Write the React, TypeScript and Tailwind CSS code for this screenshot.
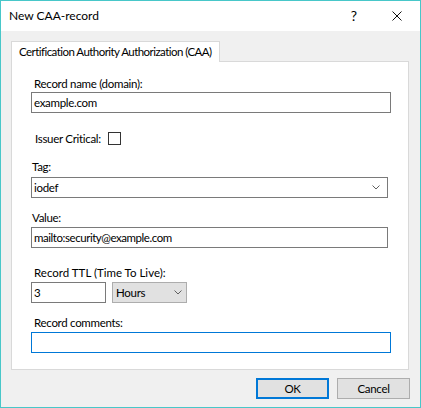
import React from "react";

const Chevron = ({ className = "" }: { className?: string }) => (
  <svg width="8" height="5" viewBox="0 0 8 5" className={className}>
    <polyline points="0.5,0.5 4,4 7.5,0.5" fill="none" stroke="#606060" strokeWidth="1" />
  </svg>
);

export default function App() {
  return (
    <div
      className="w-[421px] h-[408px] border border-[#48c7c9] bg-[#f0f0f0] flex flex-col text-[11.5px] tracking-[-0.3px] text-black whitespace-nowrap"
      style={{ fontFamily: 'Lato, "Liberation Sans", Arial, sans-serif' }}
    >
      <div className="h-[30px] bg-white flex items-center shrink-0">
        <span className="pl-[8px] text-[12px] tracking-normal leading-none">New CAA-record</span>
        <span className="ml-auto mr-[35px] text-[14px] tracking-normal leading-none">?</span>
        <svg width="10" height="10" viewBox="0 0 10 10" className="mr-[18px]">
          <line x1="0.5" y1="0.5" x2="9.5" y2="9.5" stroke="#111" strokeWidth="1" />
          <line x1="9.5" y1="0.5" x2="0.5" y2="9.5" stroke="#111" strokeWidth="1" />
        </svg>
      </div>
      <div className="px-[10px] pt-[10px] flex flex-col">
        <div className="flex">
          <div className="w-[209px] h-[21px] bg-white border border-b-0 border-[#d9d9d9] pl-[7px] flex items-center relative -mb-px z-10">
            <span className="leading-none tracking-[-0.55px]">Certification Authority Authorization (CAA)</span>
          </div>
        </div>
        <div className="w-[398px] bg-white border border-[#d9d9d9] pl-[19px] pb-[16px] flex flex-col">
          <div className="mt-[15px] h-[14px] leading-[14px] pl-[3px]">Record name (domain):</div>
          <div className="mt-[1px] w-[360px] h-[21px] border border-[#7a7a7a] pl-[2px] leading-[19px]">example.com</div>
          <div className="mt-[19px] h-[13px] flex items-center">
            <span className="pl-[4px] leading-[13px]">Issuer Critical:</span>
            <div className="ml-[7px] w-[13px] h-[13px] border border-[#333333] bg-white" />
          </div>
          <div className="mt-[15px] h-[14px] leading-[14px] pl-[1px]">Tag:</div>
          <div className="mt-[3px] w-[357px] h-[21px] border border-[#7a7a7a] pl-[2px] flex items-center justify-between">
            <span className="leading-[19px]">iodef</span>
            <Chevron className="mr-[7px]" />
          </div>
          <div className="mt-[13px] h-[14px] leading-[14px] pl-[1px]">Value:</div>
          <div className="mt-[2px] w-[357px] h-[21px] border border-[#7a7a7a] pl-[2px] leading-[19px] tracking-[-0.45px]">mailto:security@example.com</div>
          <div className="mt-[18px] h-[14px] leading-[14px] pl-[3px] tracking-normal">Record TTL (Time To Live):</div>
          <div className="mt-[2px] flex gap-[6px]">
            <div className="w-[75px] h-[21px] border border-[#7a7a7a] pl-[2px] leading-[19px] bg-white">3</div>
            <div className="w-[75px] h-[21px] border border-[#adadad] bg-[#e1e1e1] pl-[3px] flex items-center justify-between">
              <span className="leading-[19px]">Hours</span>
              <Chevron className="mr-[4px]" />
            </div>
          </div>
          <div className="mt-[13px] h-[14px] leading-[14px] pl-[3px]">Record comments:</div>
          <div className="mt-[2px] w-[360px] h-[21px] border border-[#0078d7] bg-white" />
        </div>
        <div className="mt-[8px] flex justify-end gap-[8px]">
          <button className="w-[73px] h-[21px] border-2 border-[#0078d7] bg-[#e1e1e1] flex items-center justify-center leading-none">OK</button>
          <button className="w-[73px] h-[21px] border border-[#adadad] bg-[#e1e1e1] flex items-center justify-center leading-none">Cancel</button>
        </div>
      </div>
    </div>
  );
}
